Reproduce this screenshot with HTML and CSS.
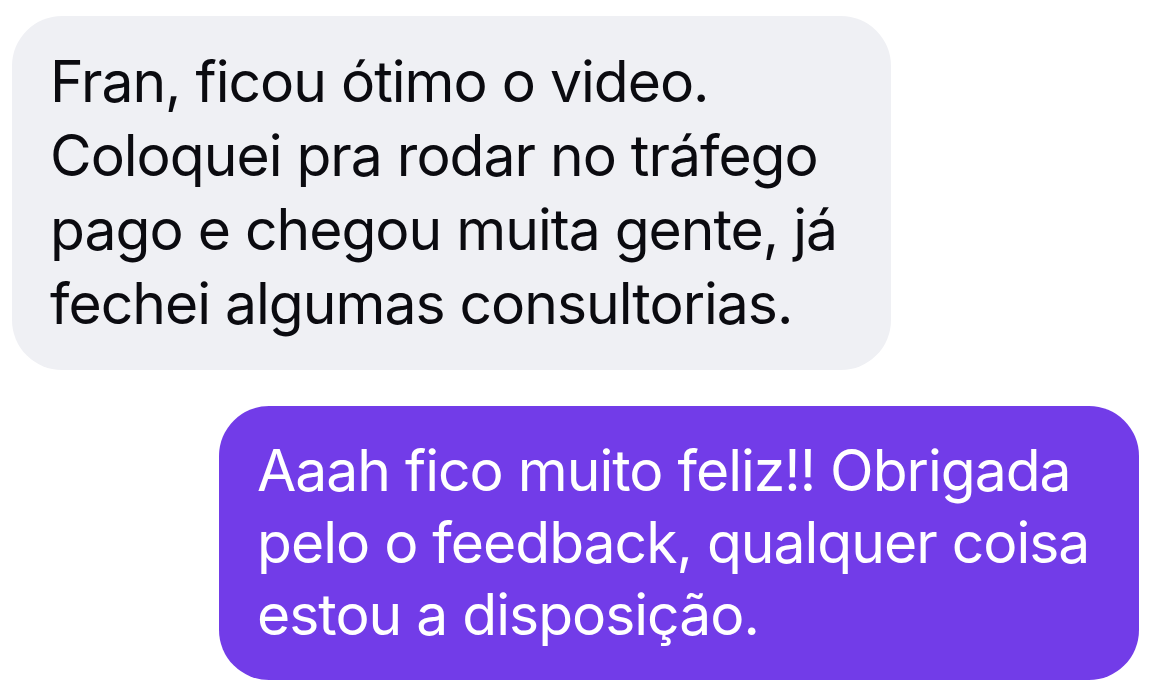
FILE: index.html
```html
<!DOCTYPE html>
<html lang="pt-BR">
<head>
  <meta charset="UTF-8" />
  <meta name="viewport" content="width=device-width, initial-scale=1.0" />
  <title>Conversa</title>
  <link rel="stylesheet" href="styles.css">
</head>
<body>
  <div class="chat">
    <div class="bubble received">
      Fran, ficou ótimo o video.<br>
      Coloquei pra rodar no tráfego<br>
      pago e chegou muita gente, já<br>
      fechei algumas consultorias.
    </div>
    <div class="bubble sent">
      Aaah fico muito feliz!! Obrigada<br>
      pelo o feedback, qualquer coisa<br>
      estou a disposição.
    </div>
  </div>
</body>
</html>
```

FILE: styles.css
```css
html, body {
  margin: 0;
  padding: 0;
  background: #fff;
  font-family: Inter, "Noto Sans", sans-serif;
}
.chat {
  display: flex;
  flex-direction: column;
  gap: 36px;
  padding: 16px 20px 0 12px;
}
.bubble {
  box-sizing: border-box;
  padding: 29px 38px;
  border-radius: 50px;
  font-size: 57px;
  line-height: 74px;
  letter-spacing: -1px;
  white-space: nowrap;
}
.received {
  align-self: flex-start;
  width: 879px;
  background: #eff0f4;
  color: #0b0b10;
}
.sent {
  align-self: flex-end;
  width: 920px;
  line-height: 72px;
  background: #723ce8;
  color: #fff;
}
```
